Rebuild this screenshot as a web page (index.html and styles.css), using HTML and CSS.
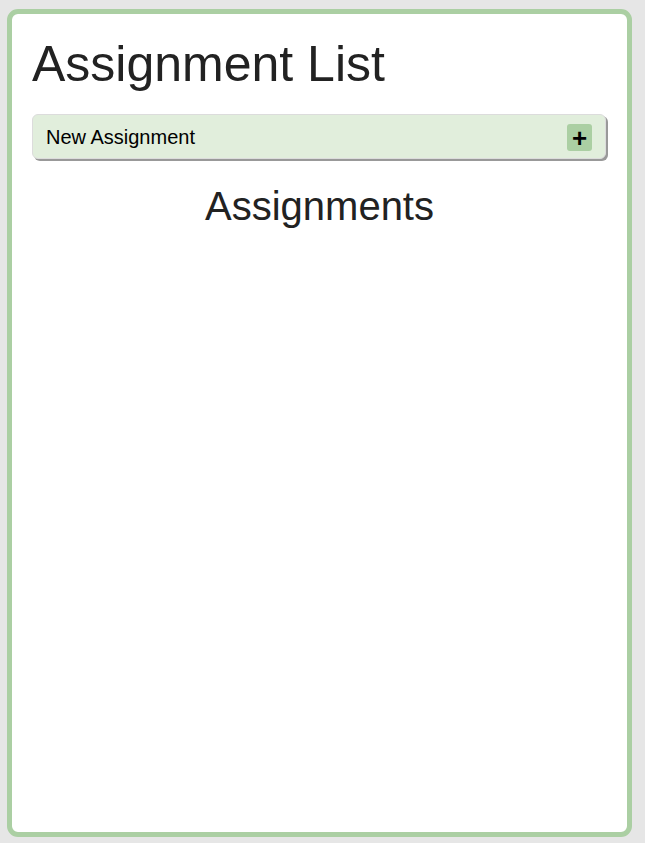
FILE: index.html
```html
<!DOCTYPE html>
<html>
<head>
<meta charset="utf-8">
<link rel="stylesheet" href="styles.css">
</head>
<body>
<div class="card">
  <h1 class="title">Assignment List</h1>
  <div class="new-bar">
    <span class="new-label">New Assignment</span>
    <span class="plus">+</span>
  </div>
  <h2 class="section">Assignments</h2>
</div>
</body>
</html>
```

FILE: styles.css
```css
html, body {
  margin: 0;
  padding: 0;
  background: #e6e6e6;
  height: 100%;
}
body {
  padding: 9px 13px 6px 7px;
  box-sizing: border-box;
  font-family: "Liberation Sans", Arial, sans-serif;
}
.card {
  box-sizing: border-box;
  height: 828px;
  background: #fff;
  border: 5px solid #abcfa3;
  border-radius: 11px;
  padding: 20px 20px 0 20px;
}
.title {
  margin: 0;
  font-size: 50px;
  font-weight: normal;
  color: #222;
  line-height: 60px;
}
.new-bar {
  margin-top: 20px;
  height: 45px;
  box-sizing: border-box;
  background: #e1eedc;
  border: 1px solid #dcdcdc;
  border-radius: 6px;
  box-shadow: 2px 2px 0 #999;
  display: flex;
  align-items: center;
  justify-content: space-between;
  padding: 2px 13px 0 13px;
  margin-right: 1px;
}
.new-label {
  font-size: 20px;
  color: #000;
}
.plus {
  width: 25px;
  height: 27px;
  background: #abcfa3;
  border-radius: 3px;
  display: flex;
  align-items: center;
  justify-content: center;
  font-size: 26px;
  font-weight: bold;
  color: #000;
  line-height: 1;
}
.section {
  margin: 23px 0 0 0;
  text-align: center;
  font-size: 40px;
  font-weight: normal;
  color: #222;
  line-height: 48px;
}
```
